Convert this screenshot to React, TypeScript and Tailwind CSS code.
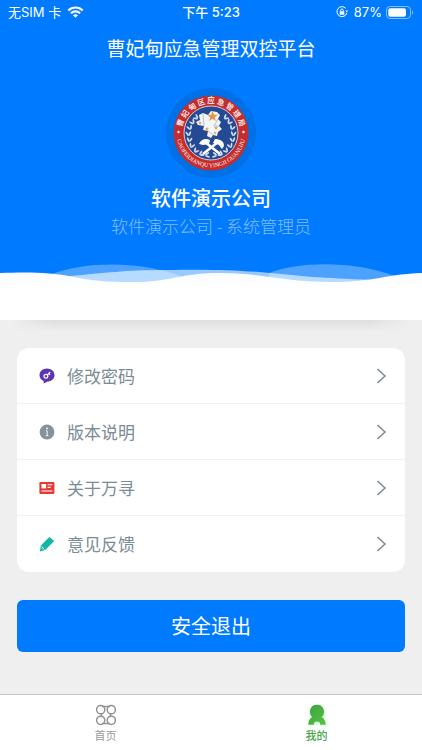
import React from "react";

// Menu entries shown in the settings card
const MenuData = [
  { id: "password", label: "修改密码", icon: <PasswordIcon /> },
  { id: "version", label: "版本说明", icon: <InfoIcon /> },
  { id: "about", label: "关于万寻", icon: <AboutIcon /> },
  { id: "feedback", label: "意见反馈", icon: <FeedbackIcon /> },
];

function PasswordIcon() {
  return (
    <svg viewBox="0 0 16 16" className="size-4" aria-hidden="true">
      <path
        d="M8 .6C12.200.6 15.500 3.400 15.500 7.200S12.200 13.400 8.600 13.500C7.600 14.200 6.200 15 4.600 15.400L4.700 12.900C2.200 12 .5 9.800.5 7.200.5 3.400 3.800.6 8 .6Z"
        fill="#5e35b1"
      />
      <circle cx="6.900" cy="8.200" r="1.900" fill="none" stroke="#fff" strokeWidth="1.200" />
      <path d="M8.300 6.900 11.200 4M9.700 5.500l1.300 1.200" fill="none" stroke="#fff" strokeWidth="1.200" />
    </svg>
  );
}

function InfoIcon() {
  return (
    <svg viewBox="0 0 16 16" className="size-4" aria-hidden="true">
      <circle cx="8" cy="8" r="7.400" fill="#84949f" />
      <circle cx="8" cy="4.400" r=".9" fill="#fff" />
      <path d="M7 6.800H8.200V11.700M6.800 11.700H9.400" fill="none" stroke="#fff" strokeWidth=".9" />
    </svg>
  );
}

function AboutIcon() {
  return (
    <svg viewBox="0 0 16 16" className="size-4" aria-hidden="true">
      <rect x=".4" y="2" width="15" height="12" rx="1.200" fill="#e53935" />
      <rect x="2.500" y="4" width="4.600" height="4.400" fill="#fff" />
      <path d="M8.600 4.700H13.400M8.600 7.400H11.600M2.500 11H13.400" stroke="#fff" strokeWidth="1.100" />
    </svg>
  );
}

function FeedbackIcon() {
  return (
    <svg viewBox="0 0 16 16" className="size-4" aria-hidden="true">
      <path d="M10.400.9 15.200 5 6.300 14 .8 15.600 1.900 9.500Z" fill="#12b5a6" />
      <path d="M2.600 10.500 5.400 13.200" fill="none" stroke="#fff" strokeWidth=".9" />
      <path d="M2.500 12.200 3.900 13.600" fill="none" stroke="#fff" strokeWidth=".6" />
    </svg>
  );
}

const StatusBar: React.FC = () => {
  return (
    <div className="grid h-6 grid-cols-3 items-center px-2 font-[Inter,'Noto_Sans_CJK_SC',sans-serif] text-[13px] leading-6">
      <div className="flex items-center gap-1.5">
        <span className="whitespace-nowrap">无SIM 卡</span>
        <svg viewBox="0 0 18 13" className="h-3 w-[17px]" aria-hidden="true">
          <g fill="none" stroke="#fff" strokeWidth="2.300">
            <path d="M1.200 4.800C5.500.5 12.500.5 16.800 4.800" />
            <path d="M4.100 7.800C6.800 5.100 11.200 5.100 13.900 7.800" />
          </g>
          <path d="M6.300 9.900C7.800 8.600 10.200 8.600 11.700 9.900L9 12.700Z" fill="#fff" />
        </svg>
      </div>
      <span className="text-center font-medium">下午 5:23</span>
      <div className="flex items-center justify-end gap-1">
        <svg viewBox="0 0 12 12" className="mr-0.5 size-3" aria-hidden="true">
          <path d="M9.700 2.300A5 5 0 1 0 10.800 7" fill="none" stroke="#fff" strokeWidth="1" />
          <path d="M9.500 4.400H12L10.800 6.600Z" fill="#fff" />
          <rect x="3.700" y="5.200" width="4.600" height="3.600" rx=".5" fill="#fff" />
          <path d="M4.700 5.400V4.300a1.300 1.300 0 0 1 2.600 0v1.100" fill="none" stroke="#fff" strokeWidth=".9" />
        </svg>
        <span>87%</span>
        <svg viewBox="0 0 28 13" className="h-[13px] w-7" aria-hidden="true">
          <rect x=".5" y=".5" width="24" height="12" rx="3.500" fill="none" stroke="#fff" strokeOpacity=".5" />
          <rect x="2.300" y="2.300" width="17.700" height="8.400" rx="2" fill="#fff" />
          <path d="M26 4.500C27.600 5 27.600 8 26 8.500Z" fill="#fff" fillOpacity=".5" />
        </svg>
      </div>
    </div>
  );
};

// One side of the wreath, the other side is its mirror
const leaves = [
  [-3, 22, 80],
  [-9, 20.5, 60],
  [-14.5, 17, 42],
  [-19, 12, 22],
  [-21.5, 6, 5],
  [-22.5, 0, -8],
  [-21.5, -6, -22],
  [-19, -11.5, -38],
  [-15.5, -16, -52],
];

const Wreath: React.FC = () => (
  <g fill="#d5e0f3">
    {leaves.map(([x, y, angle]) => (
      <g key={x + "-" + y} transform={`translate(${x} ${y}) rotate(${angle})`}>
        <ellipse cx="-1.500" cy="0" rx=".9" ry="2.500" transform="rotate(-28)" />
        <ellipse cx="1.500" cy="0" rx=".9" ry="2.500" transform="rotate(28)" />
      </g>
    ))}
  </g>
);

const star = "M0-5 1.200-1.600 4.800-1.500 1.900.600 2.900 4 0 2-2.900 4-1.900.600-4.800-1.500-1.200-1.600Z";

const Emblem: React.FC = () => {
  return (
    <div className="rounded-full bg-[#0070e6] p-[7px]">
      <svg viewBox="-38 -38 76 76" className="size-[76px] overflow-visible" role="img" aria-label="曹妃甸区应急管理局">
        <defs>
          <path id="ring-top" d="M-29 6A29.600 29.600 0 1 1 29 6" />
          <path id="ring-bottom" d="M-34.300-4A34.500 34.500 0 1 0 34.300-4" />
        </defs>
        <circle r="37.500" fill="#c42d2d" />
        <circle r="27" fill="#254a94" stroke="#e6d8dc" strokeWidth=".9" />
        <text fill="#fff" fontSize="7.500" textAnchor="middle" className="font-['Noto_Sans_CJK_SC',sans-serif] font-medium">
          <textPath href="#ring-top" startOffset="50%">
            曹 妃 甸 区 应 急 管 理 局
          </textPath>
        </text>
        <text fill="#fff" fontSize="5.800" textAnchor="middle" className="font-['Liberation_Serif',serif]">
          <textPath href="#ring-bottom" startOffset="50%">
            CAOFEIDIANQU YINGJI GUANLIJU
          </textPath>
        </text>
        <circle cx="-32.500" cy="-1" r="1.200" fill="#fff" />
        <circle cx="32.500" cy="-1" r="1.200" fill="#fff" />
        <Wreath />
        <g transform="scale(-1 1)">
          <Wreath />
        </g>
        <path
          d="M-12-18-8-20-3-18 0-22 6-21 9-18 7-14 10-11 8-7 11-4 7-1 6 3 2 2 0 5-4 3-3-2-8-3-7-7-13-8-15-11-11-13Z"
          fill="#f3f5f8"
        />
        <path d="M-8-19-7-7M7-14 3-7 8-7M-3-2 2 2" fill="none" stroke="#9fb2d6" strokeWidth=".8" />
        <path d={star} transform="translate(1.500 -16.500) scale(1.150)" fill="#e5963e" />
        <g fill="#e5a158">
          <path d={star} transform="translate(-11 -10) scale(.45)" />
          <path d={star} transform="translate(5 -5) scale(.45)" />
          <path d={star} transform="translate(-4 -4) scale(.45)" />
          <path d={star} transform="translate(4 0) scale(.4)" />
        </g>
        <path d="M-6 9 9 21M7 9-8 21" stroke="#fff" strokeWidth="2.600" />
        <path d="M-12 11C-10 6-5 5-1 7L-2 11-8 12ZM13 13C13 8 9 6 4 6L2 10 8 12 11 16Z" fill="#fff" />
      </svg>
    </div>
  );
};

const Waves: React.FC = () => {
  return (
    <svg viewBox="0 0 422 24" preserveAspectRatio="none" className="block h-6 w-full" aria-hidden="true">
      <path d="M52 14C86 1 140 1 181 16V24H52ZM269 13C300 1 354 1 395 16V24H269Z" fill="#fff" fillOpacity=".3" />
      <path d="M70 16C105 13 125 10 165 10 210 9 239 10 270 13S320 18 372 20V24H70Z" fill="#fff" fillOpacity=".6" />
      <path d="M0 13C28 12 49 12 74 17S116 22 134 22C170 22 184 12 223 13 259 13 284 22 332 22 375 22 386 14 422 13V24H0Z" fill="#fcfdff" />
    </svg>
  );
};

const Tabs: React.FC = () => {
  return (
    <nav className="mt-auto grid h-14 grid-cols-2 border-t border-[#c5c5c5] bg-white text-[11px] leading-4">
      <a href="#home" className="flex flex-col items-center pt-2 text-[#999]">
        <svg viewBox="0 0 24 24" className="size-6" fill="none" stroke="#929292" strokeWidth="1.500" aria-hidden="true">
          <circle cx="6.700" cy="6.700" r="4.100" />
          <circle cx="17.300" cy="6.700" r="4.100" />
          <circle cx="6.700" cy="17.300" r="4.100" />
          <circle cx="17.300" cy="17.300" r="4.100" />
          <path d="M8 3.400H16M8 20.600H16M7.500 10.600V13.400M16.500 10.600V13.400" />
        </svg>
        首页
      </a>
      <a href="#mine" className="flex flex-col items-center pt-2 font-medium text-[#44a64b]">
        <svg viewBox="0 0 24 24" className="size-6 drop-shadow-sm drop-shadow-green-500/20" aria-hidden="true">
          <defs>
            <linearGradient id="mine-fill" x1="0" y1="0" x2="1" y2="1">
              <stop offset="0" stopColor="#3f9d48" />
              <stop offset="1" stopColor="#53c83b" />
            </linearGradient>
          </defs>
          <path
            d="M12 1.800A7 7 0 0 1 16.800 14C19.200 15.600 20.600 18 20.800 21.800H15.200A3.200 3.200 0 0 0 8.800 21.800H3.200C3.400 18 4.800 15.600 7.200 14A7 7 0 0 1 12 1.800Z"
            fill="url(#mine-fill)"
          />
        </svg>
        我的
      </a>
    </nav>
  );
};

const App: React.FC = () => {
  return (
    <div className="flex min-h-screen flex-col bg-[#efefef] font-['Noto_Sans_CJK_SC',sans-serif]">
      {/* Header */}
      <header className="bg-[#007aff] text-white">
        <StatusBar />
        <h1 className="text-center text-[19px] leading-12">曹妃甸应急管理双控平台</h1>
        <div className="flex flex-col items-center pt-4">
          <Emblem />
          <h2 className="mt-1 text-xl leading-8 font-medium">软件演示公司</h2>
          <p className="text-[17px] leading-6 font-light text-white/50">软件演示公司 - 系统管理员</p>
        </div>
        <div className="pt-[22px]">
          <Waves />
        </div>
      </header>
      <div className="h-9 bg-white" />
      <div className="px-3">
        <div className="h-3 bg-linear-to-b from-[#dedede] to-[#efefef] mask-x-from-90% mask-x-to-100%" />
      </div>

      <main className="px-[17px] pt-4 pb-10">
        {/* Menu card */}
        <ul className="overflow-hidden rounded-xl bg-white">
          {MenuData.map((item) => (
            <li key={item.id} className="h-14 border-b border-[#f1f1f1] last:border-b-0">
              <button className="flex h-full w-full items-center gap-3 pr-4 pl-[22px] text-[17px] text-[#7b8b96]">
                {item.icon}
                <span className="flex-1 text-left">{item.label}</span>
                <svg viewBox="0 0 16 16" className="size-4" fill="none" stroke="#7b8b96" strokeWidth="1.500" aria-hidden="true">
                  <path d="M4.500 1 12 8 4.500 15" />
                </svg>
              </button>
            </li>
          ))}
        </ul>

        <button className="mt-7 h-13 w-full rounded-md bg-[#007aff] text-xl text-white">安全退出</button>
      </main>

      <Tabs />
    </div>
  );
};

export default App;
